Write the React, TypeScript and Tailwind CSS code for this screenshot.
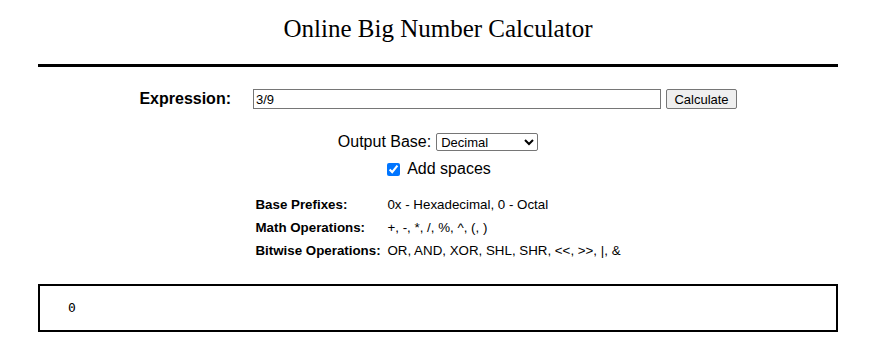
import React, { useState } from 'react';

const App = () => {
  const [expr, setExpr] = useState('3/9');
  const [spaces, setSpaces] = useState(true);

  return (
    <div className="w-[891px] h-[364px] bg-white text-black" style={{ fontFamily: '"Liberation Sans", Arial, sans-serif' }}>
      <div className="ml-[38px] w-[800px]">
        <h1 className="pt-[14px] h-[64px] text-center text-[25px] leading-[30px] font-normal" style={{ fontFamily: '"Liberation Serif", "Times New Roman", serif' }}>
          Online Big Number Calculator
        </h1>
        <div className="h-[3px] bg-black" />

        <div className="flex items-center mt-[22px] h-[20px]">
          <label className="w-[193px] text-right font-bold text-[16px]">Expression:</label>
          <input
            value={expr}
            onChange={(e) => setExpr(e.target.value)}
            className="ml-[22px] w-[408px] h-[20px] border border-[#767676] px-[2px] text-[13px] outline-none"
          />
          <button className="ml-[5px] w-[71px] h-[20px] border border-[#767676] bg-[#efefef] rounded-[2px] text-[13px] leading-none">
            Calculate
          </button>
        </div>

        <div className="flex justify-center items-center mt-[21px] text-[16px] gap-[5px]">
          <span>Output Base:</span>
          <select className="w-[102px] h-[18px] border border-[#767676] rounded-[2px] text-[13px] bg-white">
            <option>Decimal</option>
            <option>Hexadecimal</option>
            <option>Octal</option>
            <option>Binary</option>
          </select>
        </div>
        <div className="flex justify-center items-center mt-[3px] text-[16px] gap-[7px] pl-[2px]">
          <input type="checkbox" checked={spaces} onChange={() => setSpaces(!spaces)} className="w-[13px] h-[13px] accent-[#0075ff]" />
          <span>Add spaces</span>
        </div>

        <div className="flex justify-center mt-[16px]">
          <div className="grid grid-cols-[132px_auto] gap-y-[8px] text-[13.33px] leading-[15px]">
            <span className="font-bold">Base Prefixes:</span>
            <span>0x - Hexadecimal, 0 - Octal</span>
            <span className="font-bold">Math Operations:</span>
            <span>+, -, *, /, %, ^, (, )</span>
            <span className="font-bold">Bitwise Operations:</span>
            <span>OR, AND, XOR, SHL, SHR, &lt;&lt;, &gt;&gt;, |, &amp;</span>
          </div>
        </div>

        <div className="mt-[26px] h-[48px] border-2 border-black flex items-center pl-[28px]">
          <span className="text-[13px]" style={{ fontFamily: '"DejaVu Sans Mono", "Liberation Mono", monospace' }}>0</span>
        </div>
      </div>
    </div>
  );
};

export default App;
